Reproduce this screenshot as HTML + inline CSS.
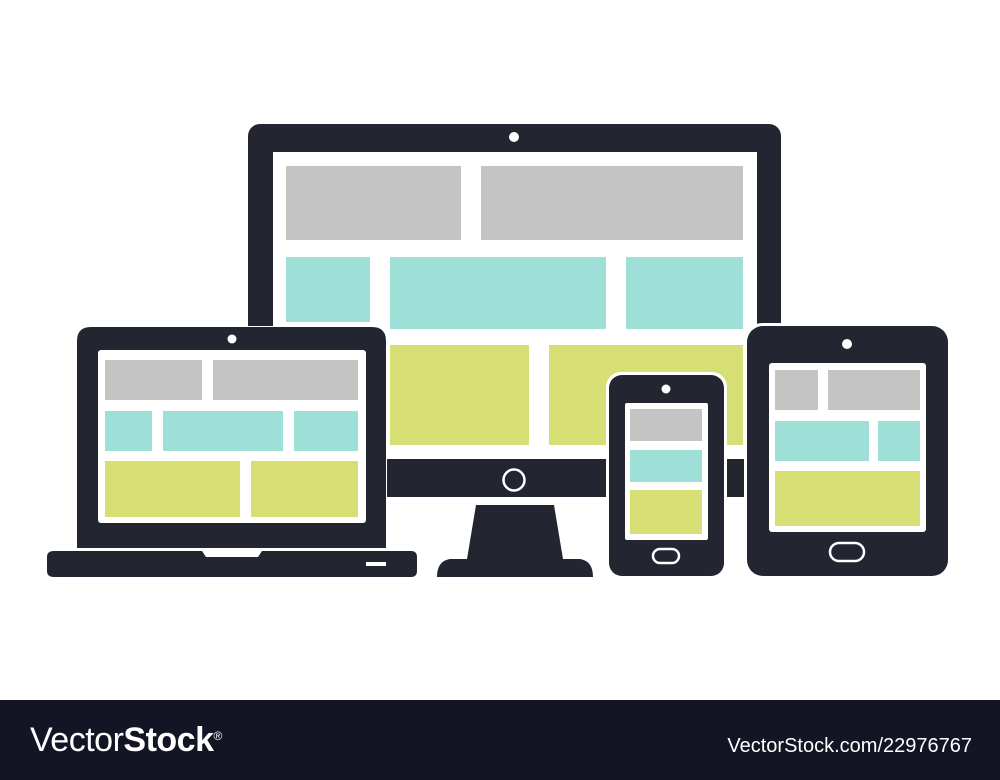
<!DOCTYPE html>
<html><head><style>
body{margin:0;width:1000px;height:780px;background:#fff;overflow:hidden;position:relative;font-family:"Liberation Sans",sans-serif}
.f{position:absolute;left:0;top:700px;width:1000px;height:80px;background:#131525;color:#fff}
</style></head><body>
<svg width="1000" height="700" style="position:absolute;left:0;top:0">
<g fill="#232631">
<rect x="248" y="124" width="533" height="373" rx="12"/>
<rect x="273" y="152" width="484" height="307" fill="#fff"/>
<circle cx="514" cy="137" r="5" fill="#fff"/>
<circle cx="514" cy="480" r="10.5" fill="none" stroke="#fff" stroke-width="2.5"/>
<path d="M476 505 L554 505 L563 559 L580 559 Q593 561 593 577 L437 577 Q437 561 450 559 L467 559 Z"/>
<rect x="286" y="166" width="175" height="74" fill="#c4c4c4"/>
<rect x="481" y="166" width="262" height="74" fill="#c4c4c4"/>
<rect x="286" y="257" width="84" height="65" fill="#9ee0d8"/>
<rect x="390" y="257" width="216" height="72" fill="#9ee0d8"/>
<rect x="626" y="257" width="117" height="72" fill="#9ee0d8"/>
<rect x="390" y="345" width="139" height="100" fill="#d6de74"/>
<rect x="549" y="345" width="194" height="100" fill="#d6de74"/>
<path d="M90 326 L373 326 Q387 326 387 340 L387 549 L76 549 L76 340 Q76 326 90 326 Z" fill="#fff"/>
<path d="M91 327 L372 327 Q386 327 386 341 L386 548 L77 548 L77 341 Q77 327 91 327 Z"/>
<rect x="98" y="350" width="268" height="173" rx="3" fill="#fff"/>
<circle cx="232" cy="339" r="4.5" fill="#fff"/>
<path d="M54 551 L202 551 L206 557 L258 557 L262 551 L411 551 Q417 551 417 557 L417 571 Q417 577 411 577 L54 577 Q47 577 47 571 L47 557 Q47 551 54 551 Z"/>
<rect x="366" y="562" width="20" height="4" fill="#fff"/>
<rect x="105" y="360" width="97" height="40" fill="#c4c4c4"/>
<rect x="213" y="360" width="145" height="40" fill="#c4c4c4"/>
<rect x="105" y="411" width="47" height="40" fill="#9ee0d8"/>
<rect x="163" y="411" width="120" height="40" fill="#9ee0d8"/>
<rect x="294" y="411" width="64" height="40" fill="#9ee0d8"/>
<rect x="105" y="461" width="135" height="56" fill="#d6de74"/>
<rect x="251" y="461" width="107" height="56" fill="#d6de74"/>
<rect x="606" y="372" width="121" height="207" rx="15" fill="#fff"/>
<rect x="609" y="375" width="115" height="201" rx="13"/>
<rect x="625" y="403" width="83" height="137" rx="2" fill="#fff"/>
<circle cx="666" cy="389" r="4.5" fill="#fff"/>
<rect x="653" y="549" width="26" height="14" rx="7" fill="none" stroke="#fff" stroke-width="2.5"/>
<rect x="630" y="409" width="72" height="32" fill="#c4c4c4"/>
<rect x="630" y="450" width="72" height="32" fill="#9ee0d8"/>
<rect x="630" y="490" width="72" height="44" fill="#d6de74"/>
<rect x="744" y="323" width="207" height="256" rx="18" fill="#fff"/>
<rect x="747" y="326" width="201" height="250" rx="16"/>
<rect x="769" y="363" width="157" height="169" rx="3" fill="#fff"/>
<circle cx="847" cy="344" r="5" fill="#fff"/>
<rect x="830" y="543" width="34" height="18" rx="9" fill="none" stroke="#fff" stroke-width="2.5"/>
<rect x="775" y="370" width="43" height="40" fill="#c4c4c4"/>
<rect x="828" y="370" width="92" height="40" fill="#c4c4c4"/>
<rect x="775" y="421" width="94" height="40" fill="#9ee0d8"/>
<rect x="878" y="421" width="42" height="40" fill="#9ee0d8"/>
<rect x="775" y="471" width="145" height="55" fill="#d6de74"/>
</g>
</svg>
<div class="f">
<div style="position:absolute;left:30px;top:20px;font-family:'Liberation Sans Narrow','Liberation Sans',sans-serif;font-size:34px;letter-spacing:-0.5px;line-height:40px"><span>Vector</span><b>Stock</b><sup style="font-size:12px;vertical-align:top;position:relative;top:-4px">®</sup></div>
<div style="position:absolute;right:28px;top:35px;font-family:'Liberation Sans Narrow','Liberation Sans',sans-serif;font-size:20px">VectorStock.com/22976767</div>
</div>
</body></html>
